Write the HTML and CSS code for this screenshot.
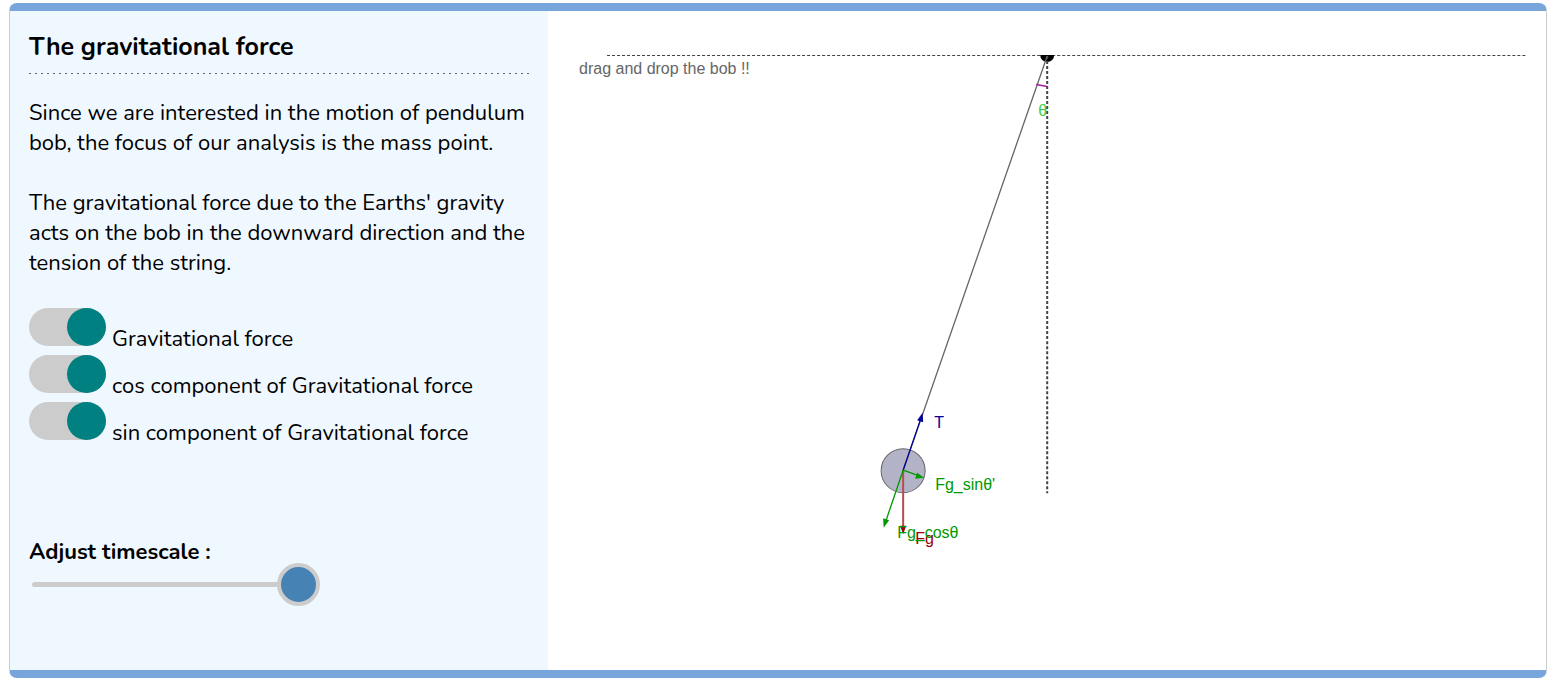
FILE: index.html
```html
<!DOCTYPE html>
<html lang="en">
<head>
<meta charset="utf-8">
<title>The gravitational force</title>
<link rel="stylesheet" href="styles.css">
</head>
<body>
<main class="card">
  <section class="panel">
    <h1 class="title">The gravitational force</h1>
    <p class="text">Since we are interested in the motion of pendulum<br>bob, the focus of our analysis is the mass point.</p>
    <p class="text">The gravitational force due to the Earths' gravity<br>acts on the bob in the downward direction and the<br>tension of the string.</p>
    <div class="switches">
      <label class="switch"><input class="toggle" type="checkbox" checked>Gravitational force</label>
      <label class="switch"><input class="toggle" type="checkbox" checked>cos component of Gravitational force</label>
      <label class="switch"><input class="toggle" type="checkbox" checked>sin component of Gravitational force</label>
    </div>
    <div class="timescale">
      <label class="timescale-label" for="timescale">Adjust timescale :</label>
      <input class="slider" id="timescale" type="range" min="0" max="100" value="100">
    </div>
  </section>
  <section class="stage">
    <svg class="diagram" viewBox="548 11 998 659" role="img" aria-label="Pendulum force diagram">
      <path class="ceiling" d="M607 55.5H1526"/>
      <path d="M1040 55H1054A7 7 0 0 1 1040 55Z"/>
      <path class="vertical" d="M1047 56V493"/>
      <circle class="bob" cx="903" cy="470.500" r="22"/>
      <path class="string" d="M1047 56L903 470"/>
      <path class="angle" d="M1036 84.500L1047 86.500"/>
      <text class="theta" x="1038" y="116">θ</text>
      <text class="hint" x="579" y="74">drag and drop the bob !!</text>
      <path class="weight" d="M903 470V528"/>
      <path class="red" d="M900 525.500H906L903 534Z"/>
      <path class="tension" d="M903 470L920.500 419"/>
      <path class="blue" d="M922.500 412.500L923 422L917 420Z"/>
      <path class="component" d="M903 470L917 475M903 470L886 520"/>
      <path class="green" d="M924 477.500L915 478.500L917 472.500ZM883.500 527.500L883 518L889 520Z"/>
      <text class="blue" x="934" y="428">T</text>
      <text class="green" x="935" y="490">Fg_sinθ'</text>
      <text class="red" x="915" y="544">Fg</text>
      <text class="green" x="897" y="538">Fg_cosθ</text>
    </svg>
  </section>
</main>
</body>
</html>
```
FILE: styles.css
```css
* { box-sizing: border-box; }
body {
  margin: 0;
  padding: 3px 9px 0;
  background: #fff;
  color: #000;
  font: 22px/30px Nunito, Lato, sans-serif;
}
.card {
  display: grid;
  grid-template-columns: 35fr 65fr;
  border: 1px solid #ccc;
  border-top: 8px solid #78a5dc;
  border-bottom: 8px solid #78a5dc;
  border-radius: 8px;
  overflow: hidden;
}
.panel {
  display: flex;
  flex-direction: column;
  gap: 30px;
  padding: 21px 19px 60px;
  background: #f0f8ff;
}
.title {
  margin: 0 0 -6px;
  padding-bottom: 12px;
  font-size: 25px;
  line-height: 30px;
  font-weight: 700;
  background: repeating-linear-gradient(90deg, #666 0 2px, transparent 2px 6px) left bottom / 100% 1px no-repeat;
}
.text { margin: 0; }
.switches { display: flex; flex-direction: column; gap: 1px; }
.switch { display: flex; align-items: baseline; gap: 6px; }
.toggle {
  appearance: none;
  display: block;
  flex: none;
  width: 77px;
  height: 38px;
  margin: 0;
  border-radius: 19px;
  background: #ccc;
}
.toggle::before {
  content: "";
  display: block;
  width: 39px;
  height: 38px;
  border-radius: 50%;
  background: #008080;
}
.toggle:checked::before { margin-left: auto; }
.timescale {
  display: flex;
  flex-direction: column;
  align-items: flex-start;
  margin-top: 59px;
}
.timescale-label { font-weight: 700; }
.slider {
  appearance: none;
  width: 288px;
  height: 5px;
  margin: 15px 3px 22px;
  border-radius: 3px;
  background: #ccc;
}
.slider::-webkit-slider-thumb {
  appearance: none;
  width: 43px;
  height: 43px;
  border: 4px solid #ccc;
  border-radius: 50%;
  background: #4682b4;
}
.stage { min-width: 0; }
.diagram {
  display: block;
  width: 100%;
  height: auto;
  font: 16px "Liberation Sans", Arial, sans-serif;
}
.ceiling { stroke: #444; stroke-dasharray: 3 2; }
.vertical { stroke: #444; stroke-width: 2; stroke-dasharray: 3 2; }
.bob { fill: #b3b3c8; stroke: #666; }
.string { stroke: #666; stroke-width: 1.3; }
.angle { fill: none; stroke: #a020a0; stroke-width: 1.5; }
.theta { fill: #4c4; }
.hint { fill: #666; }
.weight { stroke: #b84c4c; stroke-width: 2; }
.tension { stroke: #009; stroke-width: 1.3; }
.component { stroke: #090; stroke-width: 1.3; }
.red { fill: #900; }
.blue { fill: #009; }
.green { fill: #090; }
```
